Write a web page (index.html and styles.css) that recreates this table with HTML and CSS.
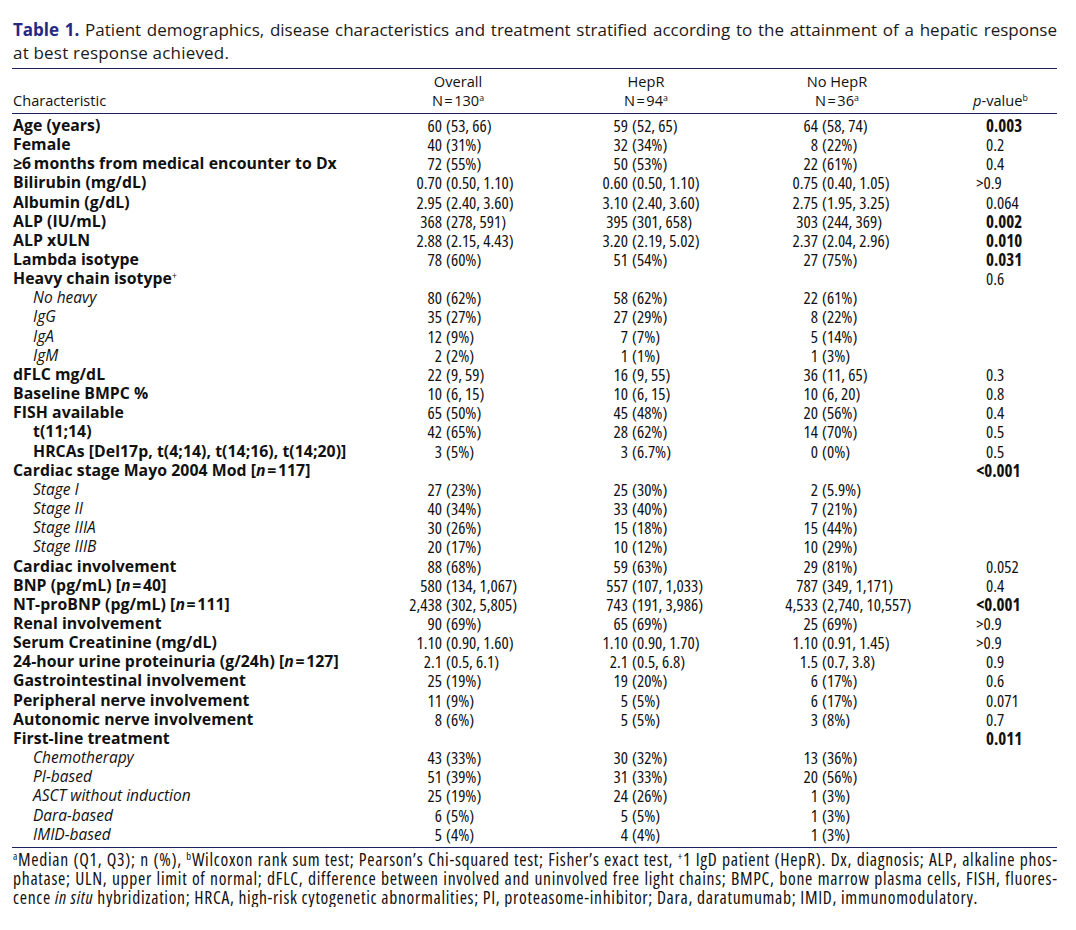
FILE: index.html
```html
<!DOCTYPE html>
<html lang="en">
<head>
<meta charset="utf-8">
<title>Table 1</title>
<link rel="stylesheet" href="styles.css">
</head>
<body>
<div class="page">
  <p class="caption">
    <span class="cap-line justify"><b class="tlabel">Table 1.</b> Patient demographics, disease characteristics and treatment stratified according to the attainment of a hepatic response</span>
    <span class="cap-line cap-last">at best response achieved.</span>
  </p>
  <table class="tbl">
    <colgroup>
      <col class="c-label"><col class="c-ov"><col class="c-hr"><col class="c-nh"><col class="c-p">
    </colgroup>
    <thead>
      <tr class="h1">
        <th class="hl"></th>
        <th class="hc hc-ov">Overall</th>
        <th class="hc hc-hr">HepR</th>
        <th class="hc hc-nh">No HepR</th>
        <th class="hp"></th>
      </tr>
      <tr class="h2">
        <th class="hl">Characteristic</th>
        <th class="hc hc-ov">N&#8202;=&#8202;130<sup>a</sup></th>
        <th class="hc hc-hr">N&#8202;=&#8202;94<sup>a</sup></th>
        <th class="hc hc-nh">N&#8202;=&#8202;36<sup>a</sup></th>
        <th class="hp"><i>p</i>-value<sup>b</sup></th>
      </tr>
    </thead>
    <tbody>
      <tr><td class="lb">Age (years)</td><td class="v"><span class="n">60</span><span class="q">(53, 66)</span></td><td class="v"><span class="n">59</span><span class="q">(52, 65)</span></td><td class="v"><span class="n">64</span><span class="q">(58, 74)</span></td><td class="p sig">0.003</td></tr>
      <tr><td class="lb">Female</td><td class="v"><span class="n">40</span><span class="q">(31%)</span></td><td class="v"><span class="n">32</span><span class="q">(34%)</span></td><td class="v"><span class="n">8</span><span class="q">(22%)</span></td><td class="p">0.2</td></tr>
      <tr><td class="lb">≥6&#8201;months from medical encounter to Dx</td><td class="v"><span class="n">72</span><span class="q">(55%)</span></td><td class="v"><span class="n">50</span><span class="q">(53%)</span></td><td class="v"><span class="n">22</span><span class="q">(61%)</span></td><td class="p">0.4</td></tr>
      <tr><td class="lb">Bilirubin (mg/dL)</td><td class="v"><span class="n">0.70</span><span class="q">(0.50, 1.10)</span></td><td class="v"><span class="n">0.60</span><span class="q">(0.50, 1.10)</span></td><td class="v"><span class="n">0.75</span><span class="q">(0.40, 1.05)</span></td><td class="p"><span class="hang">&gt;</span>0.9</td></tr>
      <tr><td class="lb">Albumin (g/dL)</td><td class="v"><span class="n">2.95</span><span class="q">(2.40, 3.60)</span></td><td class="v"><span class="n">3.10</span><span class="q">(2.40, 3.60)</span></td><td class="v"><span class="n">2.75</span><span class="q">(1.95, 3.25)</span></td><td class="p">0.064</td></tr>
      <tr><td class="lb">ALP (IU/mL)</td><td class="v"><span class="n">368</span><span class="q">(278, 591)</span></td><td class="v"><span class="n">395</span><span class="q">(301, 658)</span></td><td class="v"><span class="n">303</span><span class="q">(244, 369)</span></td><td class="p sig">0.002</td></tr>
      <tr><td class="lb">ALP xULN</td><td class="v"><span class="n">2.88</span><span class="q">(2.15, 4.43)</span></td><td class="v"><span class="n">3.20</span><span class="q">(2.19, 5.02)</span></td><td class="v"><span class="n">2.37</span><span class="q">(2.04, 2.96)</span></td><td class="p sig">0.010</td></tr>
      <tr><td class="lb">Lambda isotype</td><td class="v"><span class="n">78</span><span class="q">(60%)</span></td><td class="v"><span class="n">51</span><span class="q">(54%)</span></td><td class="v"><span class="n">27</span><span class="q">(75%)</span></td><td class="p sig">0.031</td></tr>
      <tr><td class="lb">Heavy chain isotype<sup class="plus">+</sup></td><td class="v"></td><td class="v"></td><td class="v"></td><td class="p">0.6</td></tr>
      <tr><td class="sub">No heavy</td><td class="v"><span class="n">80</span><span class="q">(62%)</span></td><td class="v"><span class="n">58</span><span class="q">(62%)</span></td><td class="v"><span class="n">22</span><span class="q">(61%)</span></td><td class="p"></td></tr>
      <tr><td class="sub">IgG</td><td class="v"><span class="n">35</span><span class="q">(27%)</span></td><td class="v"><span class="n">27</span><span class="q">(29%)</span></td><td class="v"><span class="n">8</span><span class="q">(22%)</span></td><td class="p"></td></tr>
      <tr><td class="sub">IgA</td><td class="v"><span class="n">12</span><span class="q">(9%)</span></td><td class="v"><span class="n">7</span><span class="q">(7%)</span></td><td class="v"><span class="n">5</span><span class="q">(14%)</span></td><td class="p"></td></tr>
      <tr><td class="sub">IgM</td><td class="v"><span class="n">2</span><span class="q">(2%)</span></td><td class="v"><span class="n">1</span><span class="q">(1%)</span></td><td class="v"><span class="n">1</span><span class="q">(3%)</span></td><td class="p"></td></tr>
      <tr><td class="lb">dFLC mg/dL</td><td class="v"><span class="n">22</span><span class="q">(9, 59)</span></td><td class="v"><span class="n">16</span><span class="q">(9, 55)</span></td><td class="v"><span class="n">36</span><span class="q">(11, 65)</span></td><td class="p">0.3</td></tr>
      <tr><td class="lb">Baseline BMPC %</td><td class="v"><span class="n">10</span><span class="q">(6, 15)</span></td><td class="v"><span class="n">10</span><span class="q">(6, 15)</span></td><td class="v"><span class="n">10</span><span class="q">(6, 20)</span></td><td class="p">0.8</td></tr>
      <tr><td class="lb">FISH available</td><td class="v"><span class="n">65</span><span class="q">(50%)</span></td><td class="v"><span class="n">45</span><span class="q">(48%)</span></td><td class="v"><span class="n">20</span><span class="q">(56%)</span></td><td class="p">0.4</td></tr>
      <tr><td class="lb ind">t(11;14)</td><td class="v"><span class="n">42</span><span class="q">(65%)</span></td><td class="v"><span class="n">28</span><span class="q">(62%)</span></td><td class="v"><span class="n">14</span><span class="q">(70%)</span></td><td class="p">0.5</td></tr>
      <tr><td class="lb ind">HRCAs [Del17p, t(4;14), t(14;16), t(14;20)]</td><td class="v"><span class="n">3</span><span class="q">(5%)</span></td><td class="v"><span class="n">3</span><span class="q">(6.7%)</span></td><td class="v"><span class="n">0</span><span class="q">(0%)</span></td><td class="p">0.5</td></tr>
      <tr><td class="lb">Cardiac stage Mayo 2004 Mod [<i>n</i>&#8202;=&#8202;117]</td><td class="v"></td><td class="v"></td><td class="v"></td><td class="p sig"><span class="hang">&lt;</span>0.001</td></tr>
      <tr><td class="sub">Stage I</td><td class="v"><span class="n">27</span><span class="q">(23%)</span></td><td class="v"><span class="n">25</span><span class="q">(30%)</span></td><td class="v"><span class="n">2</span><span class="q">(5.9%)</span></td><td class="p"></td></tr>
      <tr><td class="sub">Stage II</td><td class="v"><span class="n">40</span><span class="q">(34%)</span></td><td class="v"><span class="n">33</span><span class="q">(40%)</span></td><td class="v"><span class="n">7</span><span class="q">(21%)</span></td><td class="p"></td></tr>
      <tr><td class="sub">Stage IIIA</td><td class="v"><span class="n">30</span><span class="q">(26%)</span></td><td class="v"><span class="n">15</span><span class="q">(18%)</span></td><td class="v"><span class="n">15</span><span class="q">(44%)</span></td><td class="p"></td></tr>
      <tr><td class="sub">Stage IIIB</td><td class="v"><span class="n">20</span><span class="q">(17%)</span></td><td class="v"><span class="n">10</span><span class="q">(12%)</span></td><td class="v"><span class="n">10</span><span class="q">(29%)</span></td><td class="p"></td></tr>
      <tr><td class="lb">Cardiac involvement</td><td class="v"><span class="n">88</span><span class="q">(68%)</span></td><td class="v"><span class="n">59</span><span class="q">(63%)</span></td><td class="v"><span class="n">29</span><span class="q">(81%)</span></td><td class="p">0.052</td></tr>
      <tr><td class="lb">BNP (pg/mL) [<i>n</i>&#8202;=&#8202;40]</td><td class="v"><span class="n">580</span><span class="q">(134, 1,067)</span></td><td class="v"><span class="n">557</span><span class="q">(107, 1,033)</span></td><td class="v"><span class="n">787</span><span class="q">(349, 1,171)</span></td><td class="p">0.4</td></tr>
      <tr><td class="lb">NT-proBNP (pg/mL) [<i>n</i>&#8202;=&#8202;111]</td><td class="v"><span class="n">2,438</span><span class="q">(302, 5,805)</span></td><td class="v"><span class="n">743</span><span class="q">(191, 3,986)</span></td><td class="v"><span class="n">4,533</span><span class="q">(2,740, 10,557)</span></td><td class="p sig"><span class="hang">&lt;</span>0.001</td></tr>
      <tr><td class="lb">Renal involvement</td><td class="v"><span class="n">90</span><span class="q">(69%)</span></td><td class="v"><span class="n">65</span><span class="q">(69%)</span></td><td class="v"><span class="n">25</span><span class="q">(69%)</span></td><td class="p"><span class="hang">&gt;</span>0.9</td></tr>
      <tr><td class="lb">Serum Creatinine (mg/dL)</td><td class="v"><span class="n">1.10</span><span class="q">(0.90, 1.60)</span></td><td class="v"><span class="n">1.10</span><span class="q">(0.90, 1.70)</span></td><td class="v"><span class="n">1.10</span><span class="q">(0.91, 1.45)</span></td><td class="p"><span class="hang">&gt;</span>0.9</td></tr>
      <tr><td class="lb">24-hour urine proteinuria (g/24h) [<i>n</i>&#8202;=&#8202;127]</td><td class="v"><span class="n">2.1</span><span class="q">(0.5, 6.1)</span></td><td class="v"><span class="n">2.1</span><span class="q">(0.5, 6.8)</span></td><td class="v"><span class="n">1.5</span><span class="q">(0.7, 3.8)</span></td><td class="p">0.9</td></tr>
      <tr><td class="lb">Gastrointestinal involvement</td><td class="v"><span class="n">25</span><span class="q">(19%)</span></td><td class="v"><span class="n">19</span><span class="q">(20%)</span></td><td class="v"><span class="n">6</span><span class="q">(17%)</span></td><td class="p">0.6</td></tr>
      <tr><td class="lb">Peripheral nerve involvement</td><td class="v"><span class="n">11</span><span class="q">(9%)</span></td><td class="v"><span class="n">5</span><span class="q">(5%)</span></td><td class="v"><span class="n">6</span><span class="q">(17%)</span></td><td class="p">0.071</td></tr>
      <tr><td class="lb">Autonomic nerve involvement</td><td class="v"><span class="n">8</span><span class="q">(6%)</span></td><td class="v"><span class="n">5</span><span class="q">(5%)</span></td><td class="v"><span class="n">3</span><span class="q">(8%)</span></td><td class="p">0.7</td></tr>
      <tr><td class="lb">First-line treatment</td><td class="v"></td><td class="v"></td><td class="v"></td><td class="p sig">0.011</td></tr>
      <tr><td class="sub">Chemotherapy</td><td class="v"><span class="n">43</span><span class="q">(33%)</span></td><td class="v"><span class="n">30</span><span class="q">(32%)</span></td><td class="v"><span class="n">13</span><span class="q">(36%)</span></td><td class="p"></td></tr>
      <tr><td class="sub">PI-based</td><td class="v"><span class="n">51</span><span class="q">(39%)</span></td><td class="v"><span class="n">31</span><span class="q">(33%)</span></td><td class="v"><span class="n">20</span><span class="q">(56%)</span></td><td class="p"></td></tr>
      <tr><td class="sub">ASCT without induction</td><td class="v"><span class="n">25</span><span class="q">(19%)</span></td><td class="v"><span class="n">24</span><span class="q">(26%)</span></td><td class="v"><span class="n">1</span><span class="q">(3%)</span></td><td class="p"></td></tr>
      <tr><td class="sub">Dara-based</td><td class="v"><span class="n">6</span><span class="q">(5%)</span></td><td class="v"><span class="n">5</span><span class="q">(5%)</span></td><td class="v"><span class="n">1</span><span class="q">(3%)</span></td><td class="p"></td></tr>
      <tr><td class="sub">IMID-based</td><td class="v"><span class="n">5</span><span class="q">(4%)</span></td><td class="v"><span class="n">4</span><span class="q">(4%)</span></td><td class="v"><span class="n">1</span><span class="q">(3%)</span></td><td class="p"></td></tr>
    </tbody>
  </table>
  <p class="notes"><sup>a</sup>Median (Q1, Q3); n (%), <sup>b</sup>Wilcoxon rank sum test; Pearson’s Chi-squared test; Fisher’s exact test, <sup>+</sup>1 IgD patient (HepR). Dx, diagnosis; ALP, alkaline phos&shy;phatase; ULN, upper limit of normal; dFLC, difference between involved and uninvolved free light chains; BMPC, bone marrow plasma cells, FISH, fluores&shy;cence <i>in situ</i> hybridization; HRCA, high-risk cytogenetic abnormalities; PI, proteasome-inhibitor; Dara, daratumumab; IMID, immunomodulatory.</p>
</div>
</body>
</html>
```

FILE: styles.css
```css
html, body {
  margin: 0;
  padding: 0;
  background: #ffffff;
}

body {
  color: #111111;
  font-family: "Open Sans", "DejaVu Sans", sans-serif;
}

.page {
  width: 1045px;
  padding: 18px 0 0 12px;
}

.caption {
  margin: 0;
  font-size: 17px;
  line-height: 23px;
  color: #1a1a1a;
}

.cap-line {
  display: block;
  padding-left: 1px;
}

.cap-last {
  letter-spacing: 0.2px;
}

.justify {
  text-align: justify;
  text-align-last: justify;
}

.tlabel {
  color: #232a86;
  font-weight: 700;
}

.tbl {
  width: 1045px;
  margin-top: 4px;
  border-collapse: collapse;
  table-layout: fixed;
  border-top: 1px solid #1c2160;
  border-bottom: 1px solid #1c2160;
}

.c-label { width: 368px; }
.c-ov { width: 186px; }
.c-hr { width: 190px; }
.c-nh { width: 184px; }
.c-p { width: 117px; }

.tbl th,
.tbl td {
  padding: 0;
  white-space: nowrap;
  font-weight: 400;
  vertical-align: middle;
  line-height: 19px;
}

.tbl thead tr {
  height: 19px;
  font-family: "Open Sans", sans-serif;
  font-stretch: 92%;
  font-size: 14.6px;
}

.tbl thead .h1 th { padding-top: 3px; }
.tbl thead .h2 th { padding-bottom: 3px; }

.tbl thead .h2 {
  border-bottom: 1px solid #1c2160;
}

.hl {
  text-align: left;
  padding-left: 1px !important;
}

.hc { text-align: center; }
.hc-ov { padding-right: 30px !important; }
.hc-hr { padding-right: 30px !important; }
.hc-nh { padding-right: 22px !important; }

.hp {
  text-align: left;
  padding-left: 33px !important;
}

sup {
  font-size: 0.6em;
  line-height: 0;
  vertical-align: 0.55em;
}

.tbl tbody tr {
  height: 19.16px;
}

.tbl tbody tr:first-child td { padding-top: 2px; }
.tbl tbody tr:last-child td { padding-bottom: 3px; }

.lb {
  font-weight: 700 !important;
  font-size: 15.8px;
  padding-left: 1px !important;
  letter-spacing: 0.05px;
}

.lb.ind { padding-left: 21px !important; }

.sub {
  font-style: italic;
  font-size: 15.5px;
  font-stretch: 100%;
  padding-left: 21px !important;
}

.plus {
  font-weight: 400;
  font-size: 0.55em;
}

.v,
.p {
  font-size: 17px;
  font-stretch: 86%;
}

.v {
  text-align: left;
}

.n {
  display: inline-block;
  width: 62px;
  text-align: right;
}

.q {
  padding-left: 4px;
}

.p {
  padding-left: 46px !important;
}

.sig {
  font-weight: 700 !important;
}

.hang {
  margin-left: -0.58em;
}

.notes {
  margin: 2px 0 0 0;
  padding-left: 1px;
  font-size: 17.6px;
  line-height: 19px;
  font-stretch: 86%;
  letter-spacing: 0.7px;
  text-align: justify;
  hyphens: manual;
}
```
